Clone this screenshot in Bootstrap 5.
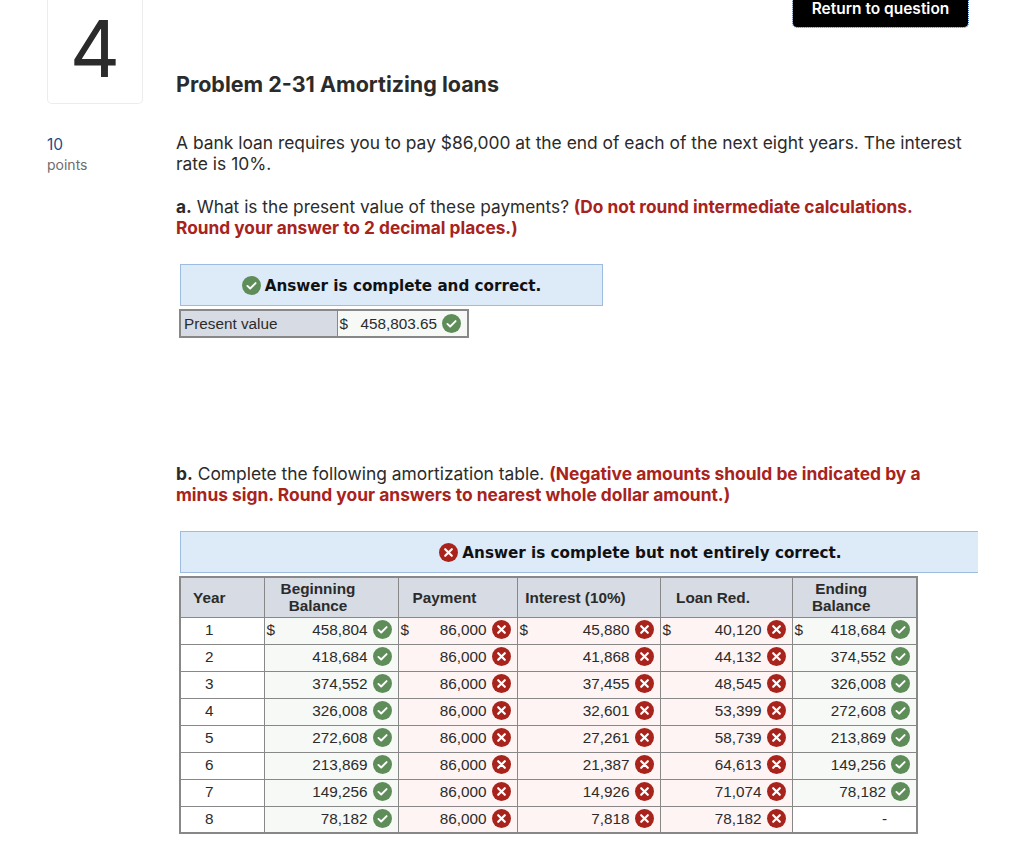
<!DOCTYPE html>
<html lang="en">
<head>
<meta charset="utf-8">
<title>Problem 2-31 Amortizing loans</title>
<link rel="stylesheet" href="https://cdn.jsdelivr.net/npm/bootstrap@5.3.0/dist/css/bootstrap.min.css">
<style>
body{font-family:"Inter","Lato",sans-serif;color:#2b2b2b;background:#fff;overflow:hidden}
.pg{width:1024px;height:863px;padding-left:47px;padding-right:55px}
.topbar{height:0}
.retbtn{width:175px;height:27px;margin-right:1px;background:#000;color:#fff;font:600 15.5px/17px "Inter",sans-serif;text-align:center;border-radius:0 0 4px 4px;outline:1px dotted #2f62b5;padding-top:0}
.headrow{height:103px}
.qnum{width:96px;height:104px;border:1px solid #ececec;border-top:0;border-radius:0 0 5px 5px;font-size:78px;line-height:98px;text-align:center;color:#2b2b2b;margin-right:33px;flex:none}
.qtitle{font-size:21.5px;font-weight:700;line-height:26px;margin-top:71px;color:#2b2b2b}
.ptsbox{width:129px;flex:none;padding-top:32px}
.ptsnum{font-size:15.5px;line-height:20px;color:#1f4a8c}
.ptslab{font-size:14px;line-height:20px;color:#6d6d6d}
.qbody{font-size:17.4px;line-height:21px;flex:1;min-width:0}
.p1{margin:29px 0 0}
.p2{margin:22px 0 0;font-size:17.3px}
.p3{margin:125px 0 0}
.red{color:#a8231c;font-weight:700}
.ansbar{margin-left:4px;background:#ddeaf8;border:1px solid #9dbde0;font:700 15.2px/20px "DejaVu Sans",sans-serif;color:#111;display:flex;align-items:center;justify-content:center;gap:4px}
.ansa{width:423px;height:42px;margin-top:26px;padding-top:1px}
.ansb{width:798px;height:42px;margin-top:26px;border-right:0;padding:1px 0 0 122px}
.ic{width:19px;height:19px;flex:none;display:block}
.pvt{margin:3px 0 0 3px;border-collapse:collapse;font:15.3px/20px "Liberation Sans",sans-serif;color:#2b2b2b;border:2px solid #888}
.pvt td{border:1px solid #888;height:27px;padding:0}
.pvl{width:157px;background:#d6dbe4;padding-left:3px!important}
.pvv{width:131px;background:#f6f9f6}
.amt{display:flex;align-items:center;justify-content:space-between;padding:0 6px 0 2px}
.amt span.nr{margin-left:auto;margin-right:5px}
.amort{margin:3px 0 0 3px;border-collapse:collapse;table-layout:fixed;width:737px;font:15.3px/17px "Liberation Sans",sans-serif;color:#2b2b2b;border:2px solid #888}
.amort th{background:#d6dbe4;border:1px solid #888;text-align:center;font-weight:700;height:40px;padding:0 26px 0 0}
.amort td{border:1px solid #888;height:27px;padding:0 0 2px}
.amort td.yr{text-align:center;background:#fff;padding-right:26px}
.ok{background:#f6f9f6}
.bad{background:#fdf4f3}
.amort td.dash{text-align:right;background:#fff;padding-right:29px}
</style>
</head>
<body>
<svg width="0" height="0" class="position-absolute">
<symbol id="c" viewBox="0 0 19 19"><circle cx="9.5" cy="9.5" r="9.5" fill="#5f8d5a"/><path d="M5.4 9.9l2.8 2.6 5.4-5.4" fill="none" stroke="#fff" stroke-width="1.9" stroke-linecap="round" stroke-linejoin="round"/></symbol>
<symbol id="x" viewBox="0 0 19 19"><circle cx="9.5" cy="9.5" r="9.5" fill="#a8231c"/><path d="M6.2 6.2l6.6 6.6M12.8 6.2l-6.6 6.6" fill="none" stroke="#fff" stroke-width="2.2" stroke-linecap="round"/></symbol>
</svg>
<div class="pg">
<div class="topbar d-flex justify-content-end"><div class="retbtn">Return to question</div></div>
<div class="headrow d-flex">
<div class="qnum">4</div>
<div class="qtitle">Problem 2-31 Amortizing loans</div>
</div>
<div class="d-flex">
<div class="ptsbox"><div class="ptsnum">10</div><div class="ptslab">points</div></div>
<div class="qbody">
<p class="p1">A bank loan requires you to pay $86,000 at the end of each of the next eight years. The interest rate is 10%.</p>
<p class="p2"><b>a.</b> What is the present value of these payments? <span class="red">(Do not round intermediate calculations. Round your answer to 2 decimal places.)</span></p>
<div class="ansbar ansa"><svg class="ic"><use href="#c"/></svg>Answer is complete and correct.</div>
<table class="pvt"><tr><td class="pvl">Present value</td><td class="pvv"><div class="amt"><span>$</span><span class="nr">458,803.65</span><svg class="ic"><use href="#c"/></svg></div></td></tr></table>
<p class="p3"><b>b.</b> Complete the following amortization table. <span class="red">(Negative amounts should be indicated by a minus sign. Round your answers to nearest whole dollar amount.)</span></p>
<div class="ansbar ansb"><svg class="ic"><use href="#x"/></svg>Answer is complete but not entirely correct.</div>
<table class="amort">
<colgroup><col style="width:84px"><col style="width:134px"><col style="width:119px"><col style="width:143px"><col style="width:132px"><col style="width:125px"></colgroup>
<thead><tr><th>Year</th><th>Beginning<br>Balance</th><th>Payment</th><th>Interest (10%)</th><th>Loan Red.</th><th>Ending<br>Balance</th></tr></thead>
<tbody>
<tr><td class="yr">1</td><td class="ok"><div class="amt"><span>$</span><span class="nr">458,804</span><svg class="ic"><use href="#c"/></svg></div></td><td class="bad"><div class="amt"><span>$</span><span class="nr">86,000</span><svg class="ic"><use href="#x"/></svg></div></td><td class="bad"><div class="amt"><span>$</span><span class="nr">45,880</span><svg class="ic"><use href="#x"/></svg></div></td><td class="bad"><div class="amt"><span>$</span><span class="nr">40,120</span><svg class="ic"><use href="#x"/></svg></div></td><td class="ok"><div class="amt"><span>$</span><span class="nr">418,684</span><svg class="ic"><use href="#c"/></svg></div></td></tr>
<tr><td class="yr">2</td><td class="ok"><div class="amt"><span class="nr">418,684</span><svg class="ic"><use href="#c"/></svg></div></td><td class="bad"><div class="amt"><span class="nr">86,000</span><svg class="ic"><use href="#x"/></svg></div></td><td class="bad"><div class="amt"><span class="nr">41,868</span><svg class="ic"><use href="#x"/></svg></div></td><td class="bad"><div class="amt"><span class="nr">44,132</span><svg class="ic"><use href="#x"/></svg></div></td><td class="ok"><div class="amt"><span class="nr">374,552</span><svg class="ic"><use href="#c"/></svg></div></td></tr>
<tr><td class="yr">3</td><td class="ok"><div class="amt"><span class="nr">374,552</span><svg class="ic"><use href="#c"/></svg></div></td><td class="bad"><div class="amt"><span class="nr">86,000</span><svg class="ic"><use href="#x"/></svg></div></td><td class="bad"><div class="amt"><span class="nr">37,455</span><svg class="ic"><use href="#x"/></svg></div></td><td class="bad"><div class="amt"><span class="nr">48,545</span><svg class="ic"><use href="#x"/></svg></div></td><td class="ok"><div class="amt"><span class="nr">326,008</span><svg class="ic"><use href="#c"/></svg></div></td></tr>
<tr><td class="yr">4</td><td class="ok"><div class="amt"><span class="nr">326,008</span><svg class="ic"><use href="#c"/></svg></div></td><td class="bad"><div class="amt"><span class="nr">86,000</span><svg class="ic"><use href="#x"/></svg></div></td><td class="bad"><div class="amt"><span class="nr">32,601</span><svg class="ic"><use href="#x"/></svg></div></td><td class="bad"><div class="amt"><span class="nr">53,399</span><svg class="ic"><use href="#x"/></svg></div></td><td class="ok"><div class="amt"><span class="nr">272,608</span><svg class="ic"><use href="#c"/></svg></div></td></tr>
<tr><td class="yr">5</td><td class="ok"><div class="amt"><span class="nr">272,608</span><svg class="ic"><use href="#c"/></svg></div></td><td class="bad"><div class="amt"><span class="nr">86,000</span><svg class="ic"><use href="#x"/></svg></div></td><td class="bad"><div class="amt"><span class="nr">27,261</span><svg class="ic"><use href="#x"/></svg></div></td><td class="bad"><div class="amt"><span class="nr">58,739</span><svg class="ic"><use href="#x"/></svg></div></td><td class="ok"><div class="amt"><span class="nr">213,869</span><svg class="ic"><use href="#c"/></svg></div></td></tr>
<tr><td class="yr">6</td><td class="ok"><div class="amt"><span class="nr">213,869</span><svg class="ic"><use href="#c"/></svg></div></td><td class="bad"><div class="amt"><span class="nr">86,000</span><svg class="ic"><use href="#x"/></svg></div></td><td class="bad"><div class="amt"><span class="nr">21,387</span><svg class="ic"><use href="#x"/></svg></div></td><td class="bad"><div class="amt"><span class="nr">64,613</span><svg class="ic"><use href="#x"/></svg></div></td><td class="ok"><div class="amt"><span class="nr">149,256</span><svg class="ic"><use href="#c"/></svg></div></td></tr>
<tr><td class="yr">7</td><td class="ok"><div class="amt"><span class="nr">149,256</span><svg class="ic"><use href="#c"/></svg></div></td><td class="bad"><div class="amt"><span class="nr">86,000</span><svg class="ic"><use href="#x"/></svg></div></td><td class="bad"><div class="amt"><span class="nr">14,926</span><svg class="ic"><use href="#x"/></svg></div></td><td class="bad"><div class="amt"><span class="nr">71,074</span><svg class="ic"><use href="#x"/></svg></div></td><td class="ok"><div class="amt"><span class="nr">78,182</span><svg class="ic"><use href="#c"/></svg></div></td></tr>
<tr><td class="yr">8</td><td class="ok"><div class="amt"><span class="nr">78,182</span><svg class="ic"><use href="#c"/></svg></div></td><td class="bad"><div class="amt"><span class="nr">86,000</span><svg class="ic"><use href="#x"/></svg></div></td><td class="bad"><div class="amt"><span class="nr">7,818</span><svg class="ic"><use href="#x"/></svg></div></td><td class="bad"><div class="amt"><span class="nr">78,182</span><svg class="ic"><use href="#x"/></svg></div></td><td class="dash">-</td></tr>
</tbody>
</table>
</div>
</div>
</div>
<script src="https://cdn.jsdelivr.net/npm/bootstrap@5.3.0/dist/js/bootstrap.bundle.min.js"></script>
</body>
</html>
